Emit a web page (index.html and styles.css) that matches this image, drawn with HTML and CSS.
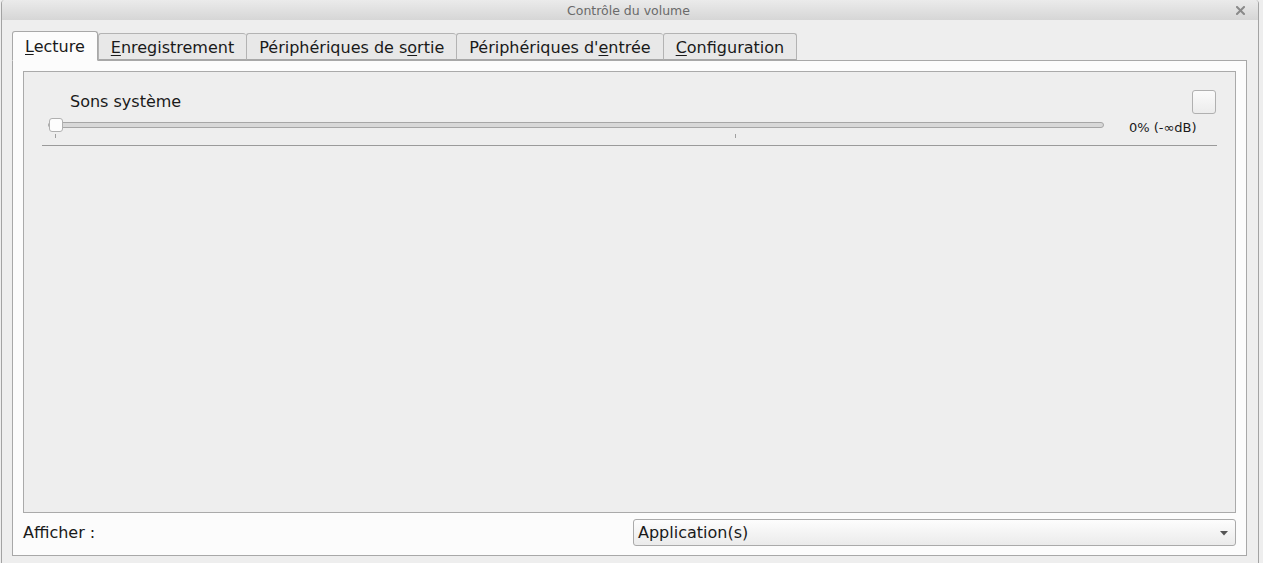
FILE: index.html
```html
<!DOCTYPE html>
<html lang="fr">
<head>
<meta charset="utf-8">
<title>Contrôle du volume</title>
<link rel="stylesheet" href="styles.css">
</head>
<body>
<div class="window">
  <div class="titlebar">
    <span class="title">Contrôle du volume</span>
    <svg class="close" width="9" height="9" viewBox="0 0 9 9"><path d="M1 1L8 8M8 1L1 8" stroke="#8a8a8a" stroke-width="2" stroke-linecap="square"/></svg>
  </div>
  <div class="body">
    <div class="tabs">
      <div class="tab active"><u>L</u>ecture</div>
      <div class="tab"><u>E</u>nregistrement</div>
      <div class="tab">Périphériques de s<u>o</u>rtie</div>
      <div class="tab">Périphériques d'<u>e</u>ntrée</div>
      <div class="tab"><u>C</u>onfiguration</div>
    </div>
    <div class="frame">
      <div class="inner">
        <div class="stream">
          <div class="stream-head">
            <span class="stream-name">Sons système</span>
            <span class="check"></span>
          </div>
          <div class="stream-slider">
            <div class="scale">
              <div class="trough"></div>
              <div class="thumb"></div>
              <span class="tick" style="left:7px"></span>
              <span class="tick" style="left:687px"></span>
            </div>
            <span class="value">0% (-∞dB)</span>
          </div>
        </div>
      </div>
      <div class="footer">
        <span class="show-label">Afficher :</span>
        <div class="combo">
          <span>Application(s)</span>
          <svg class="arrow" width="8" height="5" viewBox="0 0 8 5"><path d="M0 0H8L4 4.5Z" fill="#555"/></svg>
        </div>
      </div>
    </div>
  </div>
</div>
</body>
</html>
```
FILE: styles.css
```css
html, body {
  margin: 0;
  padding: 0;
  background: #eeeeee;
  font-family: "DejaVu Sans", "Liberation Sans", sans-serif;
  color: #1a1a1a;
}
.window {
  margin-left: 1px;
  width: 1258px;
  height: 563px;
  box-sizing: border-box;
  border-left: 1px solid #a3a3a3;
  border-right: 1px solid #a3a3a3;
  border-radius: 4px 4px 0 0;
  background: #eeeeee;
  overflow: hidden;
}
.titlebar {
  position: relative;
  height: 20px;
  background: linear-gradient(#ebebeb, #d6d6d6);
  display: flex;
  align-items: center;
  justify-content: center;
}
.title {
  font-size: 12.5px;
  color: #6a6a6a;
  margin-right: 3px;
}
.close {
  position: absolute;
  right: 13px;
  top: 6px;
}
.body {
  padding: 11px 10px 0 10px;
}
.tabs {
  display: flex;
  align-items: flex-end;
  height: 29px;
  position: relative;
  z-index: 1;
}
.tab {
  font-size: 16px;
  height: 27px;
  box-sizing: border-box;
  padding: 4px 12px 0 12px;
  background: #e8e8e8;
  border: 1px solid #b3b3b3;
  border-bottom: 1px solid #a8a8a8;
  border-right: none;
  border-radius: 3px 3px 0 0;
  white-space: nowrap;
  color: #1a1a1a;
}
.tab:last-child {
  border-right: 1px solid #b3b3b3;
}
.tab.active {
  height: 30px;
  padding-top: 5px;
  background: #fcfcfc;
  border: 1px solid #a8a8a8;
  border-bottom: 1px solid #fcfcfc;
  margin-bottom: -1px;
}
.tab.active + .tab { border-left: 1px solid #b3b3b3; }
.tab u { text-decoration-thickness: 1px; text-underline-offset: 2px; }
.frame {
  width: 1235px;
  height: 496px;
  box-sizing: border-box;
  border: 1px solid #a8a8a8;
  background: #fcfcfc;
  padding: 10px 10px 0 10px;
  display: flex;
  flex-direction: column;
}
.inner {
  height: 442px;
  box-sizing: border-box;
  border: 1px solid #aaaaaa;
  background: #eeeeee;
  padding: 18px 18px 0 18px;
}
.stream {
  border-bottom: 1px solid #9a9a9a;
  height: 56px;
  box-sizing: border-box;
}
.stream-head {
  display: flex;
  justify-content: space-between;
  align-items: center;
  height: 24px;
  padding-left: 28px;
  padding-right: 1px;
}
.stream-name {
  font-size: 16px;
  padding-bottom: 1px;
}
.check {
  width: 24px;
  height: 24px;
  box-sizing: border-box;
  border: 1px solid #b0b0b0;
  border-radius: 3px;
  background: linear-gradient(#fbfbfb, #ececec);
}
.stream-slider {
  display: flex;
  align-items: flex-start;
  height: 24px;
}
.scale {
  position: relative;
  margin-left: 6px;
  width: 1056px;
  height: 24px;
}
.trough {
  position: absolute;
  left: 0;
  right: 0;
  top: 8px;
  height: 6px;
  box-sizing: border-box;
  border: 1px solid #a6a6a6;
  border-radius: 3px;
  background: #d8d8d8;
}
.thumb {
  position: absolute;
  left: 1px;
  top: 4px;
  width: 14px;
  height: 14px;
  box-sizing: border-box;
  border: 1px solid #b0b0b0;
  border-radius: 3px;
  background: #fdfdfd;
}
.tick {
  position: absolute;
  top: 20px;
  width: 1px;
  height: 4px;
  background: #a0a0a0;
}
.value {
  font-size: 13px;
  margin-left: 25px;
  margin-top: 6px;
}
.footer {
  display: flex;
  justify-content: space-between;
  align-items: center;
  height: 42px;
  padding-bottom: 3px;
  box-sizing: border-box;
}
.show-label {
  font-size: 16px;
}
.combo {
  width: 603px;
  height: 27px;
  box-sizing: border-box;
  border: 1px solid #aaaaaa;
  border-radius: 3px;
  background: linear-gradient(#fdfdfd, #ebebeb);
  display: flex;
  align-items: center;
  justify-content: space-between;
  padding: 0 7px 0 4px;
  font-size: 16px;
}
.arrow { margin-top: 1px; }
```
